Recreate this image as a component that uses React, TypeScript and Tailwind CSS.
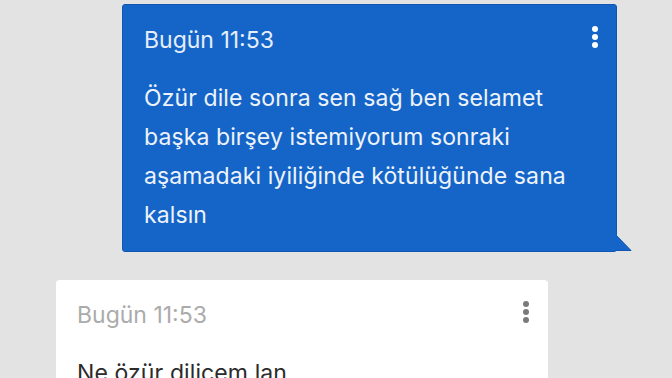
import React from 'react';

function Dots({ className }: { className: string }) {
  return (
    <div className="-mt-[6px] flex flex-col items-center gap-[2px]">
      <span className={`block h-[6px] w-[6px] rounded-full ${className}`} />
      <span className={`block h-[6px] w-[6px] rounded-full ${className}`} />
      <span className={`block h-[6px] w-[6px] rounded-full ${className}`} />
    </div>
  );
}

export default function App() {
  return (
    <div
      className="h-[378px] w-[672px] overflow-hidden bg-[#e3e3e3]"
      style={{ fontFamily: 'Inter, Roboto, sans-serif' }}
    >
      <div className="pt-[4px]">
        <div className="relative ml-[122px] w-[495px] rounded-[3px] border border-[#0e56b3] bg-[#1565c8]">
          <div className="flex items-center justify-between pl-[21px] pr-[18px] pt-[19px]">
            <span className="text-[23px] leading-[32px] text-[#e6eefa]">Bugün 11:53</span>
            <Dots className="bg-white" />
          </div>
          <p className="mt-[23px] pb-[16px] pl-[21px] pr-[40px] text-[23px] leading-[39px] tracking-[0.1px] text-[#eef3fb]">
            Özür dile sonra sen sağ ben selamet başka birşey istemiyorum sonraki aşamadaki iyiliğinde kötülüğünde sana kalsın
          </p>
          <svg
            className="absolute bottom-[-1px] right-[-16px]"
            width="17"
            height="18"
            viewBox="0 0 17 18"
          >
            <polygon points="0,0 16,16.5 0,16.5" fill="#1565c8" stroke="#0e56b3" strokeWidth="1" />
            <rect x="0" y="0" width="1.5" height="16" fill="#1565c8" />
          </svg>
        </div>

        <div className="ml-[56px] mt-[28px] w-[492px] rounded-[4px] bg-white">
          <div className="flex items-center justify-between pl-[21px] pr-[19px] pt-[19px]">
            <span className="text-[23px] leading-[32px] text-[#ababab]">Bugün 11:53</span>
            <Dots className="bg-[#7a7a7a]" />
          </div>
          <p className="mt-[23px] pb-[16px] pl-[21px] pr-[40px] text-[23px] leading-[39px] tracking-[0.1px] text-[#2b2b2b]">
            Ne özür dilicem lan
          </p>
        </div>
      </div>
    </div>
  );
}
